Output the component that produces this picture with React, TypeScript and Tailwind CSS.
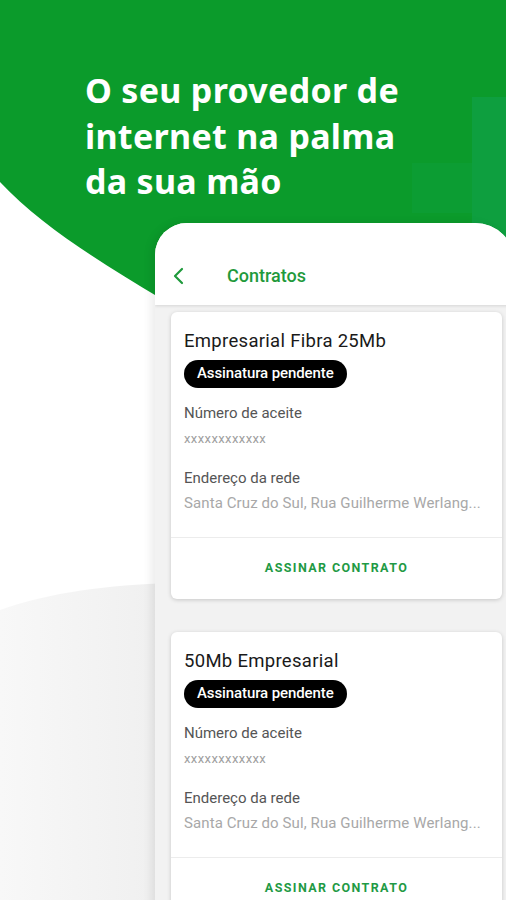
import React from "react";

function Card({ title }: { title: string }) {
  return (
    <div className="bg-white rounded-[6px] shadow-[0_1px_4px_rgba(0,0,0,0.18)] overflow-hidden">
      <div className="px-[13px] pt-[17px] pb-[22px]">
        <div className="text-[18.5px] leading-[24px] text-[#1a1a1a] tracking-[0.3px]">{title}</div>
        <div className="mt-[7px] inline-flex h-[28px] items-center rounded-full bg-black px-[13px] text-[15px] font-medium text-white tracking-[-0.1px]">
          Assinatura pendente
        </div>
        <div className="mt-[13px] text-[15px] leading-[24px] text-[#555]">Número de aceite</div>
        <div className="mt-[3px] text-[13px] leading-[22px] text-[#a0a0a0] tracking-[0.4px]">xxxxxxxxxxxx</div>
        <div className="mt-[16px] text-[15px] leading-[24px] text-[#555]">Endereço da rede</div>
        <div className="mt-[1px] text-[15px] leading-[24px] text-[#a8a8a8] whitespace-nowrap tracking-[0.1px]">
          Santa Cruz do Sul, Rua Guilherme Werlang...
        </div>
      </div>
      <div className="border-t border-[#ececec] h-[62px] flex items-center justify-center">
        <span className="text-[12.5px] font-bold tracking-[1.4px] text-[#1f9a45]">ASSINAR CONTRATO</span>
      </div>
    </div>
  );
}

export default function App() {
  return (
    <div
      className="relative w-[506px] h-[900px] overflow-hidden bg-white"
      style={{ fontFamily: "Roboto, 'Noto Sans', sans-serif" }}
    >
      {/* background decoration */}
      <svg className="absolute inset-0" width="506" height="900" viewBox="0 0 506 900">
        <defs>
          <linearGradient id="lg" x1="0" y1="0" x2="1" y2="0">
            <stop offset="0" stopColor="#f8f8f8" />
            <stop offset="1" stopColor="#efefef" />
          </linearGradient>
        </defs>
        <path d="M0 610 C50 592 110 585 170 583 L170 900 L0 900 Z" fill="url(#lg)" />
        <path d="M0 0 H506 V320 H175 L160 298 C100 262 40 225 0 182 Z" fill="#0b9b2b" />
        <rect x="472" y="97" width="40" height="200" fill="#0e9f3f" />
        <rect x="412" y="163" width="60" height="50" fill="#0c9d33" />
      </svg>

      <div className="relative">
        <h1
          className="pl-[85px] pt-[68px] text-white font-bold text-[34px] leading-[45.5px] tracking-[0.3px]"
          style={{ fontFamily: "'Noto Sans', sans-serif" }}
        >
          O seu provedor de
          <br />
          internet na palma
          <br />
          da sua mão
        </h1>

        {/* phone */}
        <div className="ml-[155px] mt-[18px] w-[360px] h-[700px] rounded-tl-[32px] rounded-tr-[40px] bg-[#f2f2f2] overflow-hidden shadow-[-4px_0_8px_rgba(0,0,0,0.08)]">
          <div className="h-[82px] bg-white flex items-end pb-[18px] shadow-[0_1px_3px_rgba(0,0,0,0.12)] relative">
            <svg width="12" height="18" viewBox="0 0 12 18" className="ml-[17px] mb-[2px]">
              <path d="M10 2 L3 9 L10 16" fill="none" stroke="#1f9a3c" strokeWidth="2.2" strokeLinecap="round" strokeLinejoin="round" />
            </svg>
            <span className="ml-[43px] text-[18px] font-medium text-[#1f9a3c] leading-[22px]">Contratos</span>
          </div>
          <div className="pl-[16px] pr-[13px] pt-[7px] flex flex-col gap-[33px]">
            <Card title="Empresarial Fibra 25Mb" />
            <Card title="50Mb Empresarial" />
          </div>
        </div>
      </div>
    </div>
  );
}
